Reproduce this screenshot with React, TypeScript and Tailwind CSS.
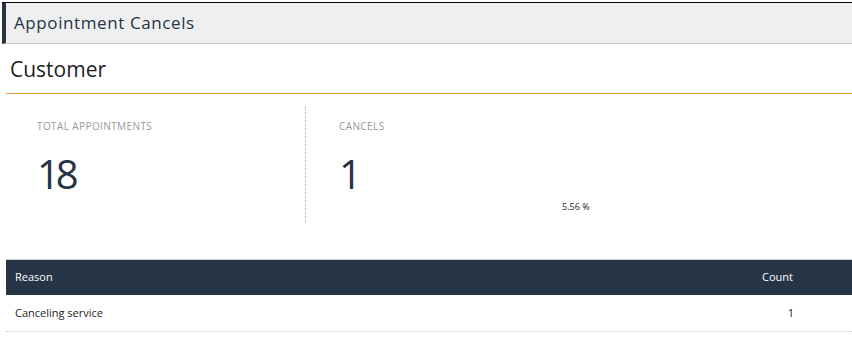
import React from "react";

export default function App() {
  return (
    <div className="w-[852px] h-[343px] bg-white overflow-hidden" style={{ fontFamily: "'Open Sans', 'Noto Sans', sans-serif" }}>
      <div className="pt-[2px] pl-[2px]">
        <div className="border-t border-black">
          <div className="flex h-[41px] items-center bg-[#efefef] border-b border-[#cccccc] border-l-4 border-l-[#263445] pl-[8px]">
            <span className="text-[17px] text-[#263445] tracking-[0.6px]">Appointment Cancels</span>
          </div>
        </div>
      </div>
      <div className="pl-[6px]">
        <div className="h-[50px] flex items-center pl-[4px] pt-[3px] border-b border-[#e8a33a]">
          <span className="text-[21px] text-[#222]">Customer</span>
        </div>
        <div className="flex pt-[13px] h-[165px]">
          <div className="w-[300px] border-r border-dotted border-[#aaa] pl-[31px] pt-[14px] h-[116px]">
            <div className="text-[10px] text-[#999] uppercase leading-none tracking-[0.4px]">Total Appointments</div>
            <div className="text-[40px] text-[#263445] leading-none mt-[23px] tracking-[-4px]">18</div>
          </div>
          <div className="pl-[33px] pt-[14px] w-[300px]">
            <div className="text-[10px] text-[#999] uppercase leading-none tracking-[0.4px]">Cancels</div>
            <div className="text-[40px] text-[#263445] leading-none mt-[23px]">1</div>
            <div className="text-[9px] text-[#222] leading-none mt-[8px] pl-[223px]">5.56 %</div>
          </div>
        </div>
        <div className="border-t border-[#ccc]">
          <div className="flex h-[35px] items-center bg-[#263445] text-white text-[11px] px-[9px]">
            <span className="flex-1">Reason</span>
            <span className="pr-[50px]">Count</span>
          </div>
          <div className="flex h-[37px] items-center text-[11px] text-[#222] px-[9px] border-b border-dotted border-[#ccc]">
            <span className="flex-1">Canceling service</span>
            <span className="pr-[49px]">1</span>
          </div>
        </div>
      </div>
    </div>
  );
}
